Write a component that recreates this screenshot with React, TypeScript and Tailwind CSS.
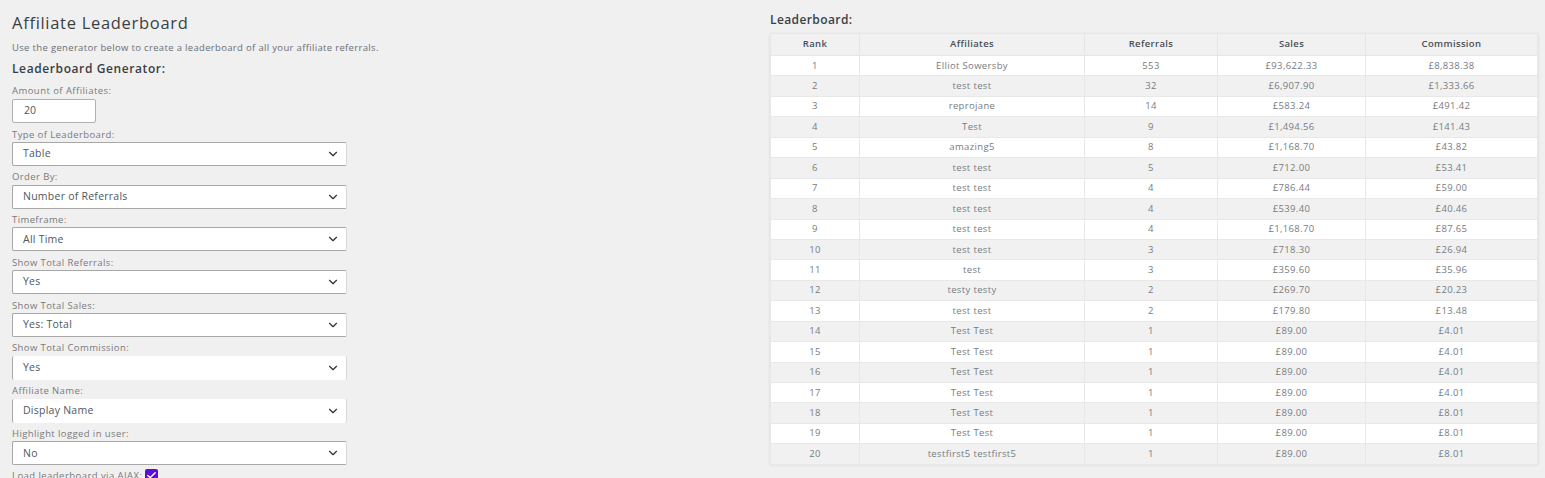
import { ChevronDown, Check } from 'lucide-react';

const fields = [
  { label: 'Type of Leaderboard:', value: 'Table' },
  { label: 'Order By:', value: 'Number of Referrals' },
  { label: 'Timeframe:', value: 'All Time' },
  { label: 'Show Total Referrals:', value: 'Yes' },
  { label: 'Show Total Sales:', value: 'Yes: Total' },
  { label: 'Show Total Commission:', value: 'Yes', bare: true },
  { label: 'Affiliate Name:', value: 'Display Name', bare: true },
  { label: 'Highlight logged in user:', value: 'No' },
];

const rows = [
  ['1', 'Elliot Sowersby', '553', '£93,622.33', '£8,838.38'],
  ['2', 'test test', '32', '£6,907.90', '£1,333.66'],
  ['3', 'reprojane', '14', '£583.24', '£491.42'],
  ['4', 'Test', '9', '£1,494.56', '£141.43'],
  ['5', 'amazing5', '8', '£1,168.70', '£43.82'],
  ['6', 'test test', '5', '£712.00', '£53.41'],
  ['7', 'test test', '4', '£786.44', '£59.00'],
  ['8', 'test test', '4', '£539.40', '£40.46'],
  ['9', 'test test', '4', '£1,168.70', '£87.65'],
  ['10', 'test test', '3', '£718.30', '£26.94'],
  ['11', 'test', '3', '£359.60', '£35.96'],
  ['12', 'testy testy', '2', '£269.70', '£20.23'],
  ['13', 'test test', '2', '£179.80', '£13.48'],
  ['14', 'Test Test', '1', '£89.00', '£4.01'],
  ['15', 'Test Test', '1', '£89.00', '£4.01'],
  ['16', 'Test Test', '1', '£89.00', '£4.01'],
  ['17', 'Test Test', '1', '£89.00', '£4.01'],
  ['18', 'Test Test', '1', '£89.00', '£8.01'],
  ['19', 'Test Test', '1', '£89.00', '£8.01'],
  ['20', 'testfirst5 testfirst5', '1', '£89.00', '£8.01'],
];

const headers = ['Rank', 'Affiliates', 'Referrals', 'Sales', 'Commission'];

function SelectField({ label, value, bare }: { label: string; value: string; bare?: boolean }) {
  return (
    <div className="flex flex-col">
      <div className="h-[18.8px] pt-[2.5px] text-[9.5px] leading-[18px] tracking-[0.4px] text-[#7a7a7a]">{label}</div>
      <div
        className={`flex h-[24px] w-[335px] items-center justify-between rounded-[2px] border-l border-r border-l-[#a8a8a8] border-r-[#d8d8d8] border-t-[#a8a8a8] border-b-[#a8a8a8] bg-white pl-[10px] pr-[6px] text-[10.5px] tracking-[0.25px] text-[#50575e] ${bare ? '' : 'border-y'}`}
      >
        {value}
        <ChevronDown className="h-[14px] w-[14px] text-[#2c3338]" strokeWidth={2} />
      </div>
    </div>
  );
}

export default function App() {
  return (
    <div className="flex h-[478px] w-[1545px] overflow-hidden bg-[#f0f0f0] font-['Open_Sans',sans-serif]">
      <div className="w-[770px] pl-[12px]">
        <h1 className="pt-[13px] text-[16.5px] leading-[19px] tracking-[0.7px] text-[#3a3f44]">Affiliate Leaderboard</h1>
        <p className="mt-[10px] text-[9.5px] leading-[12px] tracking-[0.33px] text-[#6a6f74]">
          Use the generator below to create a leaderboard of all your affiliate referrals.
        </p>
        <h2 className="mt-[7px] text-[12px] font-semibold leading-[15px] tracking-[0.6px] text-[#3a3f44]">Leaderboard Generator:</h2>
        <div className="mt-[7px] h-[16px] text-[9.5px] leading-[16px] tracking-[0.45px] text-[#7a7a7a]">Amount of Affiliates:</div>
        <div className="flex h-[24px] w-[84px] items-center rounded-[2px] border border-[#b0b0b0] bg-white pl-[11px] text-[10.5px] text-[#50575e]">20</div>
        {fields.map((f) => (
          <SelectField key={f.label} label={f.label} value={f.value} bare={f.bare} />
        ))}
        <div className="mt-[4px] flex items-center gap-[3px] text-[9.5px] leading-[12px] tracking-[0.45px] text-[#7a7a7a]">
          Load leaderboard via AJAX:
          <span className="flex h-[13px] w-[13px] items-center justify-center rounded-[2px] bg-[#5b0fd6]">
            <Check className="h-[11px] w-[11px] text-white" strokeWidth={3} />
          </span>
        </div>
      </div>
      <div className="w-[767px]">
        <h2 className="pt-[13px] text-[12px] font-semibold leading-[14px] tracking-[0.4px] text-[#3a3f44]">Leaderboard:</h2>
        <table className="mt-[7px] w-[767px] table-fixed border-collapse text-center text-[9.5px] text-[#787c80] shadow-[0_0_3px_rgba(0,0,0,0.1)]">
          <colgroup>
            <col className="w-[89px]" />
            <col className="w-[225px]" />
            <col className="w-[133px]" />
            <col className="w-[148px]" />
            <col className="w-[172px]" />
          </colgroup>
          <thead>
            <tr className="h-[21.5px] bg-[#f1f1f1]">
              {headers.map((h) => (
                <th key={h} className="border-x border-b border-[#e6e6e6] text-[9.5px] font-semibold tracking-[0.35px] text-[#4a4f54]">
                  {h}
                </th>
              ))}
            </tr>
          </thead>
          <tbody>
            {rows.map((r, i) => (
              <tr key={r[0]} className={`h-[20.45px] ${i % 2 === 0 ? 'bg-white' : 'bg-[#f1f1f1]'}`}>
                {r.map((c, j) => (
                  <td key={j} className="border-x border-b border-[#e8e8e8] p-0 tracking-[0.35px]">
                    {c}
                  </td>
                ))}
              </tr>
            ))}
          </tbody>
        </table>
      </div>
    </div>
  );
}
